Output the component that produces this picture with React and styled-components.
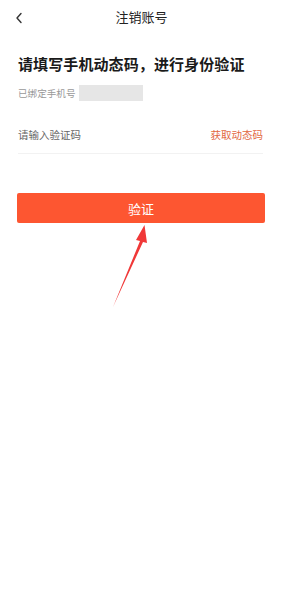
import React from "react";
import styled, { createGlobalStyle } from "styled-components";

const Global = createGlobalStyle`
  html, body { margin: 0; padding: 0; background: #fff; }
  body { font-family: "Noto Sans CJK SC", "Noto Sans", sans-serif; }
`;

const Page = styled.div`
  position: relative;
  width: 283px;
  min-height: 600px;
  background: #fff;
`;

const Header = styled.div`
  position: relative;
  height: 34px;
  display: flex;
  align-items: center;
  justify-content: center;
`;

const Back = styled.svg`
  position: absolute;
  left: 15px;
  top: 12px;
`;

const Title = styled.div`
  font-size: 13px;
  color: #222;
  line-height: 34px;
`;

const Body = styled.div`
  padding: 0 18px;
  display: flex;
  flex-direction: column;
`;

const Heading = styled.div`
  margin-top: 19px;
  font-size: 15px;
  font-weight: 700;
  color: #1a1a1a;
  line-height: 22px;
  letter-spacing: 0.1px;
  white-space: nowrap;
`;

const PhoneRow = styled.div`
  margin-top: 10px;
  display: flex;
  align-items: center;
  gap: 3px;
  height: 16px;
`;

const PhoneLabel = styled.span`
  font-size: 9.6px;
  color: #999;
  line-height: 16px;
`;

const Mask = styled.span`
  width: 64px;
  height: 16px;
  background: #e6e6e6;
`;

const InputRow = styled.div`
  margin-top: 16px;
  height: 34px;
  display: flex;
  align-items: center;
  justify-content: space-between;
  border-bottom: 1px solid #f2f2f2;
  margin-right: 2px;
  padding-bottom: 2px;
`;

const Placeholder = styled.span`
  font-size: 10.5px;
  color: #666;
`;

const GetCode = styled.span`
  font-size: 10.5px;
  color: #e2673f;
`;

const Button = styled.button`
  margin-top: 39px;
  margin-left: -1px;
  width: 248px;
  height: 30px;
  border: none;
  border-radius: 2px;
  background: #fd5631;
  color: #fff;
  font-family: inherit;
  font-size: 13px;
  display: flex;
  align-items: center;
  justify-content: center;
  padding: 0;
`;

const Arrow = styled.svg`
  position: absolute;
  left: 0;
  top: 0;
  pointer-events: none;
`;

export default function App() {
  return (
    <Page>
      <Global />
      <Header>
        <Back width="10" height="12" viewBox="0 0 10 12">
          <path d="M6 1.5 L2 6 L6 10.5" fill="none" stroke="#333" strokeWidth="1.4" strokeLinecap="round" strokeLinejoin="round" />
        </Back>
        <Title>注销账号</Title>
      </Header>
      <Body>
        <Heading>请填写手机动态码，进行身份验证</Heading>
        <PhoneRow>
          <PhoneLabel>已绑定手机号</PhoneLabel>
          <Mask />
        </PhoneRow>
        <InputRow>
          <Placeholder>请输入验证码</Placeholder>
          <GetCode>获取动态码</GetCode>
        </InputRow>
        <Button>验证</Button>
      </Body>
      <Arrow width="283" height="600" viewBox="0 0 283 600">
        <path d="M113 307 L140 241 L136 240 L144.5 225 L147 243 L143 242 Z" fill="#f03838" />
      </Arrow>
    </Page>
  );
}
